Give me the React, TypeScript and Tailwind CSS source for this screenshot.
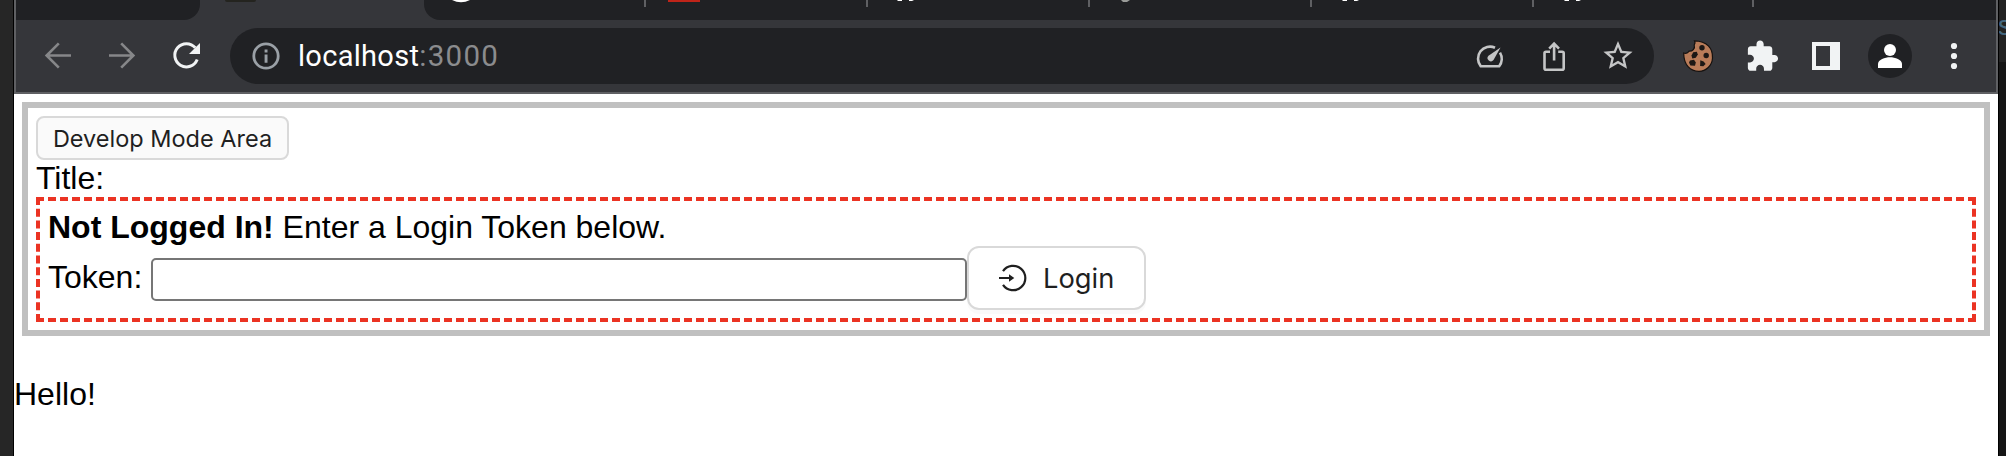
import React from "react";

function TabStrip() {
  return (
    <div className="flex h-5 overflow-hidden bg-[#35363a]">
      <div className="w-[184px] rounded-br-[16px] bg-[#202124]" />
      <div className="flex w-[224px] pl-[25px]">
        <div className="h-[2px] w-[31px] rounded-b-[2px] bg-[#24241f]" />
      </div>
      <div className="flex flex-1 rounded-bl-[16px] bg-[#202124]">
        <svg width="1572" height="20" viewBox="424 0 1572 20">
          <path d="M452 0Q461 4.500 470 0Z" fill="#fff" />
          <g fill="#5f6063">
            <rect x="644" width="2" height="7" />
            <rect x="866" width="2" height="7" />
            <rect x="1088" width="2" height="7" />
            <rect x="1310" width="2" height="7" />
            <rect x="1532" width="2" height="7" />
            <rect x="1752" width="2" height="7" />
          </g>
          <rect x="668" width="32" height="2" fill="#bf2419" />
          <g fill="#fff">
            <path d="M897 0h5v1h-4zM909 0h5l-2 1h-3z" />
            <path d="M1342 0h5v1h-4zM1354 0h5l-2 1h-3z" />
            <path d="M1564 0h5v1h-4zM1576 0h5l-2 1h-3z" />
          </g>
          <path d="M1121 0h9l-3 2h-4z" fill="#999b98" />
        </svg>
      </div>
    </div>
  );
}

function Toolbar() {
  return (
    <div className="flex h-[72px] items-center bg-[#35363a]">
      <svg width="214" height="72" viewBox="16 20 214 72" fill="none">
        <g stroke="#868789" strokeWidth="2.6">
          <path d="M71 55.500H47M58.800 43.300 46.600 55.500l12.200 12.200" />
          <path d="M109 55.500h24M121.200 43.300l12.200 12.200-12.200 12.200" />
        </g>
        <path d="M195.300 47.800A11.600 11.600 0 1 0 197.200 59.500" stroke="#f1f3f4" strokeWidth="3" />
        <path d="M200 43v11h-11z" fill="#f1f3f4" />
      </svg>
      <div className="flex h-14 w-[1424px] items-center rounded-full bg-[#202124]">
        <svg className="ml-[22px]" width="28" height="28" viewBox="0 0 28 28">
          <circle cx="14" cy="14" r="12.200" fill="none" stroke="#9aa0a6" strokeWidth="2.800" />
          <path d="M12.600 7.500h2.900v3h-2.900zM12.600 12.600h2.900v8.200h-2.900z" fill="#9aa0a6" />
        </svg>
        <div className="ml-[18px] flex-1 font-[Roboto,sans-serif] text-[29px] leading-[56px] tracking-[0.3px] text-white">
          localhost<span className="text-[29.500px] tracking-[1.300px] text-[#8b8c8e]">:3000</span>
        </div>
        <svg width="184" height="56" viewBox="1470 28 184 56" fill="none">
          <g stroke="#c4c5c6" strokeWidth="2.600">
            <path d="M1495 47.700A12 12 0 0 0 1480.800 66.300H1499.200A12 12 0 0 0 1500 52.700" strokeLinejoin="round" />
            <path d="M1550 51.800h-4a1.500 1.500 0 0 0-1.500 1.500v14.900a1.500 1.500 0 0 0 1.500 1.500h16.200a1.500 1.500 0 0 0 1.500-1.500V53.300a1.500 1.500 0 0 0-1.500-1.500h-4" />
            <path d="M1554.100 60.500V44M1549.200 48.600l4.900-4.900 4.900 4.900" />
          </g>
          <path d="M1500.500 47.600 1493.500 60a3.300 3.300 0 1 1-5-4.300z" fill="#c4c5c6" />
          <svg x="1600.500" y="38.200" width="35" height="35" viewBox="0 0 24 24">
            <path fill="#c4c5c6" d="m22 9.240-7.190-.62L12 2 9.190 8.630 2 9.240l5.460 4.730L5.820 21 12 17.270 18.180 21l-1.630-7.030zM12 15.400l-3.760 2.270 1-4.280-3.320-2.880 4.380-.38L12 6.100l1.710 4.040 4.380.38-3.320 2.880 1 4.280z" />
          </svg>
        </svg>
      </div>
      <svg width="342" height="72" viewBox="1654 20 342 72">
        <path d="M1694.500 40.800C1707 41 1713 48.500 1712.500 58c-.3 7.500-6.500 13.300-13.500 13.300-8.800 0-15.300-6.300-15.300-18.300 2.300.7 4.100.3 5.300-1.800 3.500.3 6.300-2.600 5.200-6.200 1-1.500 1.200-2.700.3-4.200z" fill="#b97c59" stroke="#15110f" strokeWidth="1.200" />
        <g fill="#1d1815">
          <circle cx="1702" cy="47.700" r="2.700" />
          <path d="M1693.200 52.300l3.600-.6 1 2.800-2 3.300-3.500.6-.8-3z" />
          <circle cx="1706.200" cy="55.500" r="2.700" />
          <path d="M1690 60.500l4-.8 1.800 2.700-.8 3.300-4.600-.2-1.400-3z" />
          <path d="M1700.300 60.200l3.300 1.300 2 2.500-2.300 2.200-3.200-.2z" />
        </g>
        <svg x="1744.700" y="38.300" width="34.500" height="34.500" viewBox="0 0 24 24">
          <path fill="#f1f3f4" d="M20.500 11H19V7c0-1.100-.9-2-2-2h-4V3.500C13 2.120 11.880 1 10.500 1S8 2.120 8 3.500V5H4c-1.100 0-1.990.9-1.990 2v3.800H3.500c1.490 0 2.700 1.210 2.700 2.700s-1.210 2.700-2.700 2.700H2V20c0 1.100.9 2 2 2h3.800v-1.500c0-1.490 1.210-2.700 2.700-2.700s2.700 1.210 2.700 2.700V22H17c1.100 0 2-.9 2-2v-4h1.500c1.380 0 2.500-1.120 2.500-2.500S21.880 11 20.500 11z" transform="translate(.2 .6)" />
        </svg>
        <path d="M1812 42h28v28h-28zM1816 46v20h14V46z" fill="#f1f3f4" fillRule="evenodd" />
        <circle cx="1890" cy="56" r="22" fill="#202124" />
        <circle cx="1890" cy="50" r="6" fill="#fff" />
        <path d="M1878 68v-4c0-4.500 7-6.800 12-6.800s12 2.300 12 6.800v4z" fill="#fff" />
        <g fill="#f1f3f4">
          <circle cx="1954" cy="46" r="3.100" />
          <circle cx="1954" cy="56" r="3.100" />
          <circle cx="1954" cy="66" r="3.100" />
        </g>
      </svg>
    </div>
  );
}

function LoginIcon() {
  return (
    <svg width="30" height="30" viewBox="998 263 30 30">
      <path d="M1003 271.200a12.200 12.200 0 1 1 0 13.600" fill="none" stroke="#1f1f1f" strokeWidth="2.200" />
      <path d="M999 277h10v-2.700l5.300 3.700-5.300 3.700V279h-10z" fill="#1f1f1f" />
    </svg>
  );
}

function Page() {
  return (
    <main className="h-[362px] bg-white pt-2 font-['Liberation_Sans',Arial,sans-serif] text-[32px] leading-[37px] text-black">
      <section className="mx-2 border-[6px] border-[#c0c0c0] p-2">
        <button className="flex h-11 w-[253px] items-center justify-center rounded-[8px] border-2 border-[#d9d9d9] bg-[#fafafa] pt-[2px] font-[Inter,sans-serif] text-[23.500px] leading-none whitespace-nowrap text-[#1f1f1f]">
          Develop Mode Area
        </button>
        <div>Title:</div>
        <div className="border-4 border-dashed border-[#eb3323] p-2">
          <div>
            <b>Not Logged In!</b> Enter a Login Token below.
          </div>
          <div className="flex h-16">
            <label htmlFor="token" className="w-[103px] pt-[13px]">Token:</label>
            <input id="token" className="mt-3 h-[43px] w-[816px] rounded-[5px] border-2 border-[#767676] bg-white outline-none" />
            <button className="flex h-16 w-[179px] items-center rounded-[12px] border-2 border-[#d9d9d9] bg-white pl-[29px] font-[Inter,sans-serif] text-[27.300px] leading-none text-[#1f1f1f] shadow-[0_4px_0_rgba(0,0,0,0.02)]">
              <LoginIcon />
              <span className="ml-[15px] pt-[2px]">Login</span>
            </button>
          </div>
        </div>
      </section>
      <p className="mt-10">Hello!</p>
    </main>
  );
}

export default function App() {
  return (
    <div className="flex h-[456px] w-[2006px] overflow-hidden bg-[#151515]">
      <div className="w-[14px] border-r border-black bg-[#262626]" />
      <div className="w-[1984px]">
        <header className="h-[94px] border-x-2 border-b-2 border-[#5f6063]">
          <TabStrip />
          <Toolbar />
        </header>
        <Page />
      </div>
      <div className="w-2 overflow-hidden border-l border-black">
        <div className="h-[62px] bg-[#222222] pt-2 font-['Liberation_Sans',sans-serif] text-[27px] leading-[36px] text-[#42677f]">
          <span className="-ml-[1px]">s</span>
        </div>
      </div>
    </div>
  );
}
